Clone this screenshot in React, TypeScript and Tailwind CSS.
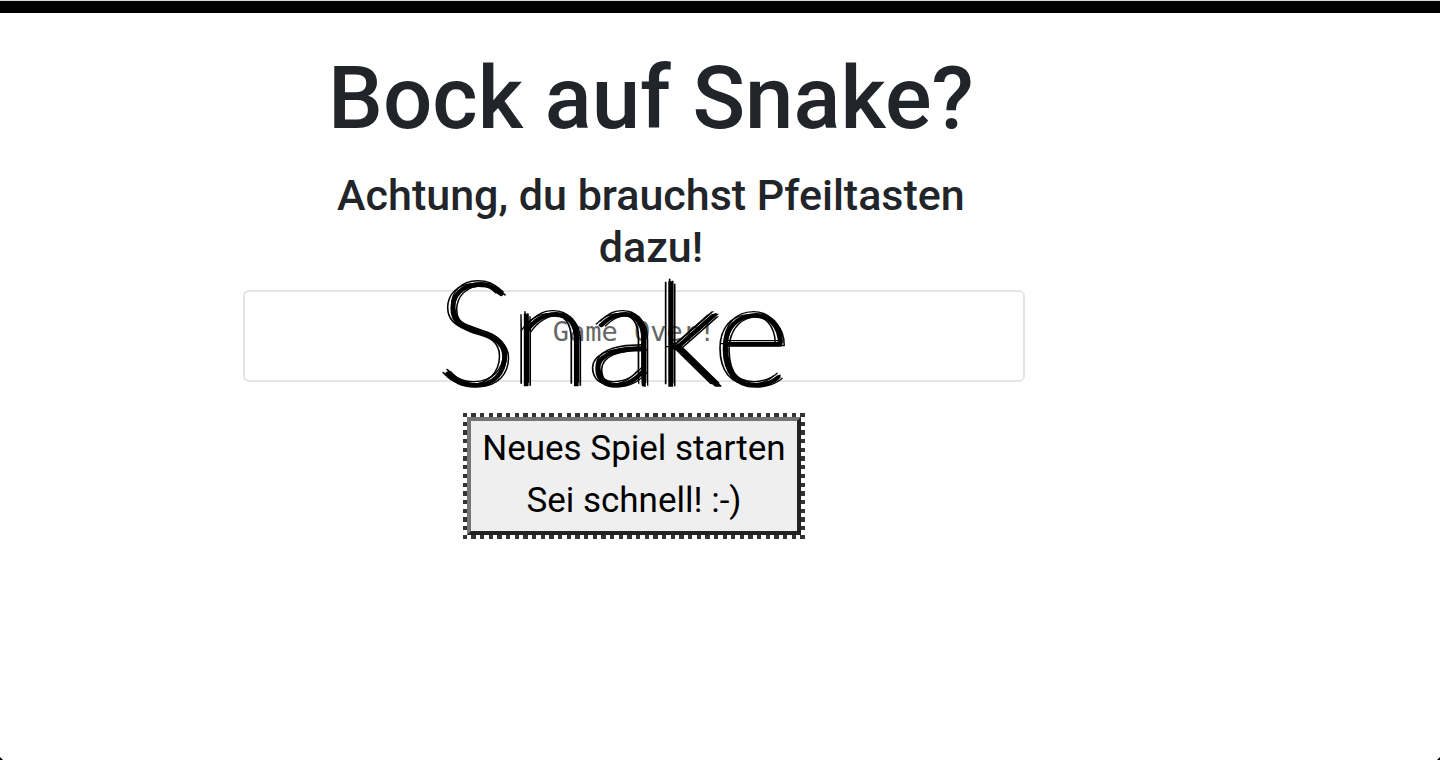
import React, { useState } from 'react';

function SnakeLogo() {
  // offset shadows give the lettering its scribbled pen look
  return (
    <div className="absolute inset-x-0 -top-[46px] text-center font-['Lato'] text-[142px] font-thin leading-[168px] text-black pr-10 pointer-events-none [-webkit-text-stroke:3px_#000] [text-shadow:2px_-2px_0_#000,-5px_-1px_0_#000,4px_1px_0_#000,-1px_-4px_0_#000]">
      Snake
    </div>
  );
}

function StartButton({ onClick }: { onClick: () => void }) {
  return (
    <div className="p-1 bg-no-repeat [background-image:repeating-linear-gradient(90deg,#333_0_1.266%,transparent_1.266%_2.532%),repeating-linear-gradient(90deg,#333_0_1.266%,transparent_1.266%_2.532%),repeating-linear-gradient(180deg,#333_0_3.448%,transparent_3.448%_6.897%),repeating-linear-gradient(180deg,#333_0_3.448%,transparent_3.448%_6.897%)] [background-size:100%_4px,100%_4px,4px_100%,4px_100%] [background-position:top,bottom,left,right]">
      <button
        type="button"
        onClick={onClick}
        className="block border-4 border-t-[#767676] border-l-[#767676] border-r-[#222] border-b-[#222] bg-[#efefef] px-[11px] pt-[2px] pb-1 text-[35px] leading-[52px] text-black"
      >
        Neues Spiel starten
        <br />
        Sei schnell! :-)
      </button>
    </div>
  );
}

export default function App() {
  const [status, setStatus] = useState('Game Over!');

  return (
    <div className="relative min-h-screen bg-white font-['Roboto',sans-serif] text-[#212529]">
      <header className="h-[13px] border-t border-[#d5dad9] bg-black" />

      <main className="ml-[16.875%] w-[54.3%] pt-8">
        <div className="pl-[54px] pr-5 text-center font-medium">
          <h1 className="text-[87px] leading-[106px] whitespace-nowrap">Bock auf Snake?</h1>
          <h2 className="mt-[18px] text-[43px] leading-[52px]">
            Achtung, du brauchst Pfeiltasten dazu!
          </h2>
        </div>

        <div className="relative mt-[17px] h-[92px] rounded-md border-2 border-[#e5e5e5] pt-[22px] text-center">
          <output className="block font-['DejaVu_Sans_Mono',monospace] text-[27px] leading-9 text-[#666]">
            {status}
          </output>
          <SnakeLogo />
        </div>

        <div className="mt-[31px] flex justify-center">
          <StartButton onClick={() => setStatus('')} />
        </div>
      </main>

      {/* rounded window corners */}
      <span className="absolute bottom-0 left-0 size-[3px] bg-black [clip-path:polygon(0_0,100%_100%,0_100%)]" />
      <span className="absolute bottom-0 right-0 size-[3px] bg-black [clip-path:polygon(100%_0,100%_100%,0_100%)]" />
    </div>
  );
}
